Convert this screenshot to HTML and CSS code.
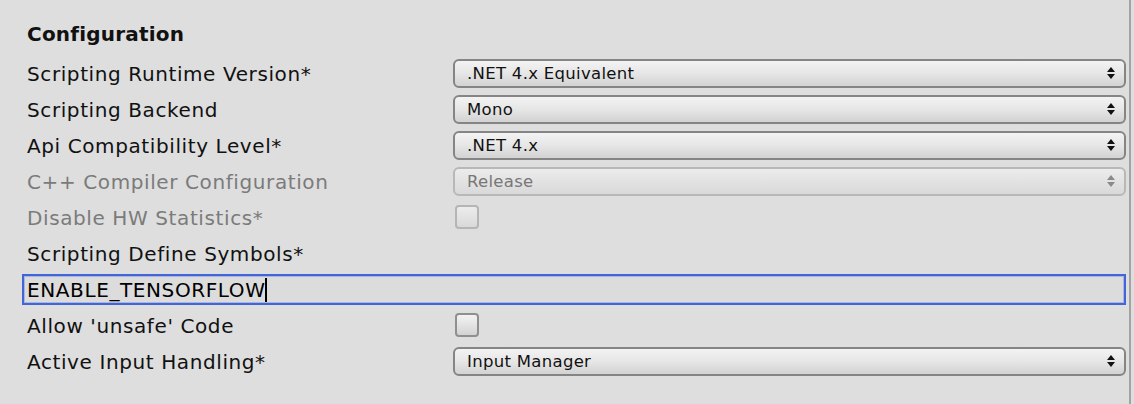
FILE: index.html
```html
<!DOCTYPE html>
<html>
<head>
<meta charset="utf-8">
<link rel="stylesheet" href="styles.css">
</head>
<body>
<div class="panel">
  <div class="heading">Configuration</div>

  <div class="row">
    <div class="label">Scripting Runtime Version*</div>
    <div class="control"><div class="select"><span>.NET 4.x Equivalent</span><svg class="arrows" width="8" height="12" viewBox="0 0 8 12"><path d="M4 0 L8 5 L0 5 Z M0 7 L8 7 L4 12 Z"/></svg></div></div>
  </div>

  <div class="row">
    <div class="label">Scripting Backend</div>
    <div class="control"><div class="select"><span>Mono</span><svg class="arrows" width="8" height="12" viewBox="0 0 8 12"><path d="M4 0 L8 5 L0 5 Z M0 7 L8 7 L4 12 Z"/></svg></div></div>
  </div>

  <div class="row">
    <div class="label">Api Compatibility Level*</div>
    <div class="control"><div class="select"><span>.NET 4.x</span><svg class="arrows" width="8" height="12" viewBox="0 0 8 12"><path d="M4 0 L8 5 L0 5 Z M0 7 L8 7 L4 12 Z"/></svg></div></div>
  </div>

  <div class="row disabled">
    <div class="label">C++ Compiler Configuration</div>
    <div class="control"><div class="select"><span>Release</span><svg class="arrows" width="8" height="12" viewBox="0 0 8 12"><path d="M4 0 L8 5 L0 5 Z M0 7 L8 7 L4 12 Z"/></svg></div></div>
  </div>

  <div class="row disabled">
    <div class="label">Disable HW Statistics*</div>
    <div class="control"><div class="checkbox"></div></div>
  </div>

  <div class="row">
    <div class="label">Scripting Define Symbols*</div>
  </div>

  <div class="field-row">
    <div class="textfield">ENABLE_TENSORFLOW<span class="caret"></span></div>
  </div>

  <div class="row">
    <div class="label">Allow 'unsafe' Code</div>
    <div class="control"><div class="checkbox"></div></div>
  </div>

  <div class="row">
    <div class="label">Active Input Handling*</div>
    <div class="control"><div class="select"><span>Input Manager</span><svg class="arrows" width="8" height="12" viewBox="0 0 8 12"><path d="M4 0 L8 5 L0 5 Z M0 7 L8 7 L4 12 Z"/></svg></div></div>
  </div>
</div>
</body>
</html>
```

FILE: styles.css
```css
html, body {
  margin: 0;
  padding: 0;
  background: #dedede;
}

body {
  width: 1134px;
  height: 404px;
  overflow: hidden;
  font-family: "DejaVu Sans", "Noto Sans", sans-serif;
  color: #111;
}

.panel {
  width: 1131px;
  height: 404px;
  box-sizing: border-box;
  border-right: 2px solid #a3a3a3;
  padding-top: 16px;
}

.heading {
  height: 36px;
  line-height: 36px;
  padding-left: 27px;
  font-size: 20px;
  letter-spacing: 0.2px;
  font-weight: bold;
  margin-bottom: 3px;
}

.row {
  display: flex;
  align-items: center;
  height: 36px;
  padding-left: 27px;
}

.label {
  width: 426px;
  flex: none;
  font-size: 20px;
  letter-spacing: 0.6px;
  white-space: nowrap;
  padding-top: 2px;
}

.control {
  width: 673px;
  flex: none;
  display: flex;
  align-items: center;
}

.select {
  width: 100%;
  height: 29px;
  box-sizing: border-box;
  border: 2px solid #858585;
  border-radius: 6px;
  background: linear-gradient(#f3f3f3, #e6e6e6 50%, #d2d2d2);
  display: flex;
  align-items: center;
  justify-content: space-between;
  padding: 0 9px 0 12px;
  font-size: 16.5px;
  letter-spacing: 0.3px;
  color: #111;
}

.arrows {
  fill: #111;
}

.disabled .label {
  color: #7b7b7b;
}

.disabled .select {
  border-color: #b8b8b8;
  color: #777;
  background: linear-gradient(#ececec, #e2e2e2 50%, #d9d9d9);
}

.disabled .arrows {
  fill: #8a8a8a;
}

.checkbox {
  width: 24px;
  height: 24px;
  box-sizing: border-box;
  margin-left: 2px;
  border: 2px solid #8f8f8f;
  border-radius: 4px;
  background: linear-gradient(#f3f3f3, #d3d3d3);
}

.disabled .checkbox {
  border-color: #b5b5b5;
  background: linear-gradient(#ececec, #d9d9d9);
}

.field-row {
  height: 36px;
  display: flex;
  align-items: center;
  padding-left: 22px;
}

.textfield {
  width: 1104px;
  height: 31px;
  box-sizing: border-box;
  border: 2px solid #4166d9;
  box-shadow: inset 0 0 0 1px #aab6dc;
  background: #dcdcdc;
  font-size: 20px;
  letter-spacing: 0.6px;
  line-height: 27px;
  padding-left: 3px;
  padding-top: 2px;
  color: #000;
  display: flex;
  align-items: center;
}

.caret {
  display: inline-block;
  width: 2px;
  height: 24px;
  background: #000;
  margin-left: -1px;
}
```
